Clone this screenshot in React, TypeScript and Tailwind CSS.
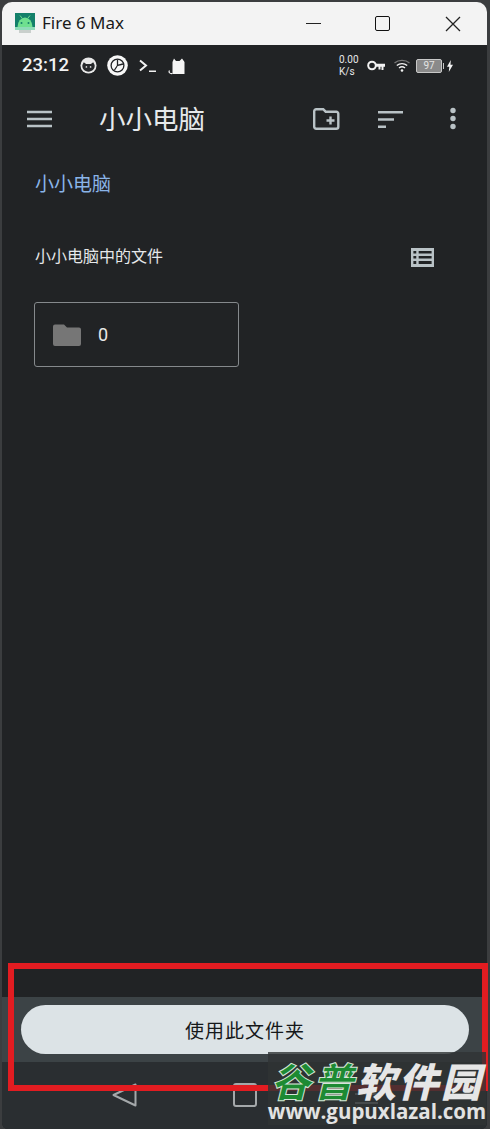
const cjk = "font-['Roboto','Noto_Sans_CJK_SC',sans-serif]";

const AndroidLogo = () => (
  <svg width="20" height="21" viewBox="0 0 20 21">
    <rect x="0" y="0" width="20" height="14" fill="#14806a" />
    <path d="M5 2.500 7 5M15 2.500 13 5" stroke="#6fe08f" strokeWidth="1" />
    <path d="M2.500 14a7.500 9.500 0 0 1 15 0z" fill="#6fe08f" />
    <circle cx="6.500" cy="10" r="1" fill="#14806a" />
    <circle cx="13.500" cy="10" r="1" fill="#14806a" />
    <rect x="0" y="14" width="20" height="3" fill="#8fdcb8" />
    <rect x="4" y="17" width="12" height="3" fill="#c9cfcc" />
  </svg>
);

const CatFace = () => (
  <svg width="17" height="17" viewBox="0 0 18 18">
    <circle cx="9" cy="9" r="8.500" fill="#e8e8e8" />
    <path d="M2.500 8.500 4 5.500 6.500 7.500h5L14 5.500l1.500 3c.5 4-2.500 7-6.500 7s-7-3-6.500-7z" fill="#26282b" />
    <circle cx="6.800" cy="10.500" r=".9" fill="#d8d8d8" />
    <circle cx="11.200" cy="10.500" r=".9" fill="#d8d8d8" />
  </svg>
);

const PieBadge = () => (
  <svg width="21" height="21" viewBox="0 0 21 21">
    <circle cx="10.500" cy="10.500" r="10.300" fill="#f7f7f7" />
    <circle cx="10.500" cy="10.500" r="6.400" fill="none" stroke="#202225" strokeWidth="1.300" />
    <path d="M10.500 4.500v6l5.500-1.500M10.500 10.500l-3 4.500" fill="none" stroke="#202225" strokeWidth="1.300" />
  </svg>
);

const Prompt = () => (
  <svg width="18" height="14" viewBox="0 0 18 14">
    <path d="M1 1.500 7 6.500 1 11.500" fill="none" stroke="#f2f2f2" strokeWidth="2" />
    <path d="M10 12.200h7" stroke="#f2f2f2" strokeWidth="1.500" />
  </svg>
);

const Cat = () => (
  <svg width="18" height="18" viewBox="0 0 18 18">
    <path d="M4.500 17V5L6 1.500 8 4h3.500L14 1.500 16.500 5v12z" fill="#f5f5f5" />
    <path d="M4.500 16.500C1.500 17 .5 15 1.500 13.500" fill="none" stroke="#f5f5f5" strokeWidth="1.200" />
  </svg>
);

const KeyIcon = () => (
  <svg width="18" height="11" viewBox="0 0 18 11">
    <circle cx="5" cy="5.500" r="3.800" fill="none" stroke="#f2f2f2" strokeWidth="2" />
    <path d="M8 3.800h10v3h-1.500V10h-2V6.800h-1v2.700h-2V6.800H8z" fill="#f2f2f2" />
  </svg>
);

const Wifi = () => (
  <svg width="16" height="13" viewBox="0 0 16 13">
    <path d="M.5 4C4.500.5 11.500.5 15.500 4" fill="none" stroke="#777" strokeWidth="1.300" />
    <path d="M2.800 6.500C5.800 4 10.200 4 13.200 6.500" fill="none" stroke="#f2f2f2" strokeWidth="1.400" />
    <path d="M5 9c1.800-1.400 4.200-1.400 6 0" fill="none" stroke="#f2f2f2" strokeWidth="1.400" />
    <circle cx="8" cy="11.500" r="1.300" fill="#f2f2f2" />
  </svg>
);

const Battery = () => (
  <div className="flex items-center">
    <div className="flex h-[14px] w-[26px] items-center justify-center rounded-[2px] border border-[#c8c8c8] bg-[#8a8a8a] text-[10px] leading-none text-[#e4e4e4] font-['Roboto',sans-serif]">
      97
    </div>
    <div className="ml-[1px] h-[6px] w-[1px] bg-[#c8c8c8]" />
    <svg className="ml-[3px]" width="6" height="12" viewBox="0 0 6 12">
      <path d="M3.800 0 0 6.800h2.300L1.800 12 6 4.800H3.500z" fill="#f2f2f2" />
    </svg>
  </div>
);

const MenuIcon = () => (
  <svg width="26" height="18" viewBox="0 0 26 18">
    <path d="M0 2h25M0 9h25M0 16h25" stroke="#b9c2c6" strokeWidth="2.400" />
  </svg>
);

const NewFolder = () => (
  <svg width="27" height="22" viewBox="0 0 27 22">
    <path
      d="M1.200 3.200a2 2 0 0 1 2-2h7l2.500 2.500h10.600a2 2 0 0 1 2 2v13.100a2 2 0 0 1-2 2H3.200a2 2 0 0 1-2-2z"
      fill="none"
      stroke="#b9c2c6"
      strokeWidth="2.400"
    />
    <path d="M17.500 8.500v8M13.500 12.500h8" stroke="#b9c2c6" strokeWidth="2.400" />
  </svg>
);

const SortIcon = () => (
  <svg width="25" height="17" viewBox="0 0 25 17">
    <path d="M0 1.200h25M0 8.500h16M0 15.800h8" stroke="#b9c2c6" strokeWidth="2.400" />
  </svg>
);

const MoreIcon = () => (
  <svg width="6" height="24" viewBox="0 0 6 24">
    <circle cx="3" cy="3.500" r="2.700" fill="#b9c2c6" />
    <circle cx="3" cy="11.500" r="2.700" fill="#b9c2c6" />
    <circle cx="3" cy="19.500" r="2.700" fill="#b9c2c6" />
  </svg>
);

const ListIcon = () => (
  <svg width="23" height="19" viewBox="0 0 24 19" preserveAspectRatio="none">
    <rect width="24" height="19" fill="#b9c2c6" />
    <path d="M2.500 3h3v2.500h-3zM2.500 8h3v2.500h-3zM2.500 13h3v3h-3zM8 3h13.500v2.500H8zM8 8h13.500v2.500H8zM8 13h13.500v3H8z" fill="#212325" />
  </svg>
);

const FolderIcon = () => (
  <svg width="28" height="22" viewBox="0 0 28 22">
    <path d="M0 2.500A2 2 0 0 1 2 .5h9l3 3h12a2 2 0 0 1 2 2V20a2 2 0 0 1-2 2H2a2 2 0 0 1-2-2z" fill="#767676" />
  </svg>
);

const App = () => {
  return (
    <div className="relative flex h-[1129px] w-[490px] flex-col overflow-hidden bg-[#3b3d3f]">
      {/* Window frame */}
      <div className="ml-[2px] mr-[3px] mt-[2px] flex min-h-0 flex-1 flex-col overflow-hidden rounded-t-[10px] rounded-b-[6px]">
        {/* Title bar */}
        <div className="flex h-[43px] shrink-0 items-center bg-[#f3f3f3] pl-[13px] pr-[26px]">
          <AndroidLogo />
          <span className="mb-[2px] ml-[7px] text-[17px] text-[#1a1a1a] font-['Noto_Sans',sans-serif]">Fire 6 Max</span>
          <div className="ml-auto flex items-center">
            <div className="h-[1px] w-[15px] bg-[#222]" />
            <div className="ml-[54px] h-[15px] w-[15px] rounded-[2px] border-[1.500px] border-[#111]" />
            <svg className="ml-[55px]" width="16" height="16" viewBox="0 0 16 16">
              <path d="M1 1l14 14M15 1 1 15" stroke="#222" strokeWidth="1.300" />
            </svg>
          </div>
        </div>

        {/* App body */}
        <div className={`flex min-h-0 flex-1 flex-col bg-[#212325] ${cjk}`}>
          {/* Status bar */}
          <div className="flex h-[40px] shrink-0 items-center pl-[20px] pr-[34px] pt-[1px]">
            <span className="w-[49px] text-[18.500px] font-medium leading-none text-[#f2f2f2]">23:12</span>
            <div className="ml-[9px]">
              <CatFace />
            </div>
            <div className="ml-[10px]">
              <PieBadge />
            </div>
            <div className="ml-[11px]">
              <Prompt />
            </div>
            <div className="ml-[11px]">
              <Cat />
            </div>
            <div className="ml-auto flex items-center">
              <div className="flex w-[22px] flex-col text-[10px] leading-[12px] text-[#e8e8e8]">
                <span>0.00</span>
                <span>K/s</span>
              </div>
              <div className="ml-[6px]">
                <KeyIcon />
              </div>
              <div className="ml-[9px]">
                <Wifi />
              </div>
              <div className="ml-[6px]">
                <Battery />
              </div>
            </div>
          </div>

          {/* Toolbar */}
          <div className="flex h-[68px] shrink-0 items-center pl-[25px] pr-[31px]">
            <MenuIcon />
            <span className="ml-[46px] mt-[2px] text-[26.500px] leading-none text-[#e6eaec]">小小电脑</span>
            <div className="ml-auto flex items-center">
              <NewFolder />
              <div className="ml-[38px]">
                <SortIcon />
              </div>
              <div className="ml-[47px]">
                <MoreIcon />
              </div>
            </div>
          </div>

          {/* Breadcrumb */}
          <div className="ml-[33px] mt-[20px] text-[19px] leading-[24px] text-[#8ab4e8]">小小电脑</div>

          {/* Section heading */}
          <div className="mt-[46px] flex items-center pl-[33px] pr-[53px]">
            <span className="text-[16px] leading-[28px] text-[#e6e8ea]">小小电脑中的文件</span>
            <div className="ml-auto">
              <ListIcon />
            </div>
          </div>

          {/* Folder card */}
          <div className="ml-[32px] mt-[31px] flex h-[65px] w-[205px] items-center rounded-[3px] border border-[#85898c] pl-[18px]">
            <FolderIcon />
            <span className="ml-[17px] text-[18px] text-[#e8e8e8]">0</span>
          </div>

          {/* Bottom action */}
          <div className="mt-auto flex h-[65px] shrink-0 items-center bg-[#3c4346] pl-[19px] pr-[18px]">
            <button className="flex h-[49px] w-full items-center justify-center rounded-full bg-[#dce3e6] pt-[5px] text-[19px] tracking-[1px] text-[#15181a]">
              使用此文件夹
            </button>
          </div>

          {/* Navigation bar */}
          <div className="flex h-[67px] shrink-0 items-start bg-[#2a2e31] pl-[110px] pt-[21px]">
            <svg width="25" height="24" viewBox="0 0 25 24">
              <path d="M23.500 1.500v21L1.500 12z" fill="none" stroke="#a4a8aa" strokeWidth="2" strokeLinejoin="round" />
            </svg>
            <div className="ml-[96px] h-[24px] w-[24px] rounded-[3px] border-2 border-[#a4a8aa]" />
            <div className="ml-[98px] mt-[10px] flex w-[23px] flex-col gap-[7px]">
              <div className="h-[2px] bg-[#a4a8aa]" />
              <div className="h-[2px] bg-[#a4a8aa]" />
            </div>
          </div>
        </div>
      </div>

      {/* Red annotation box */}
      <div className="pointer-events-none absolute left-[8px] top-[963px] h-[128px] w-[480px] border-[6px] border-[#e21c21]" />

      {/* Watermark */}
      <div className="pointer-events-none absolute left-[268px] top-[1052px] flex h-[73px] w-[218px] flex-col items-center bg-[#2f3335]/80">
        <div className="mt-[8px] h-[40px] whitespace-nowrap text-[40px] font-black italic leading-[40px] tracking-[2.500px] font-['Noto_Sans_CJK_SC',sans-serif]">
          <span className="text-[#1d8a33] [-webkit-text-stroke:1px_#d5e5d8]">谷普</span>
          <span className="text-[#e6e6e6]">软件园</span>
        </div>
        <div className="whitespace-nowrap text-[20.500px] font-bold leading-[23px] text-[#e2e2e2] font-['Open_Sans',sans-serif]">
          www.gupuxlazal.com
        </div>
      </div>
    </div>
  );
};

export default App;
